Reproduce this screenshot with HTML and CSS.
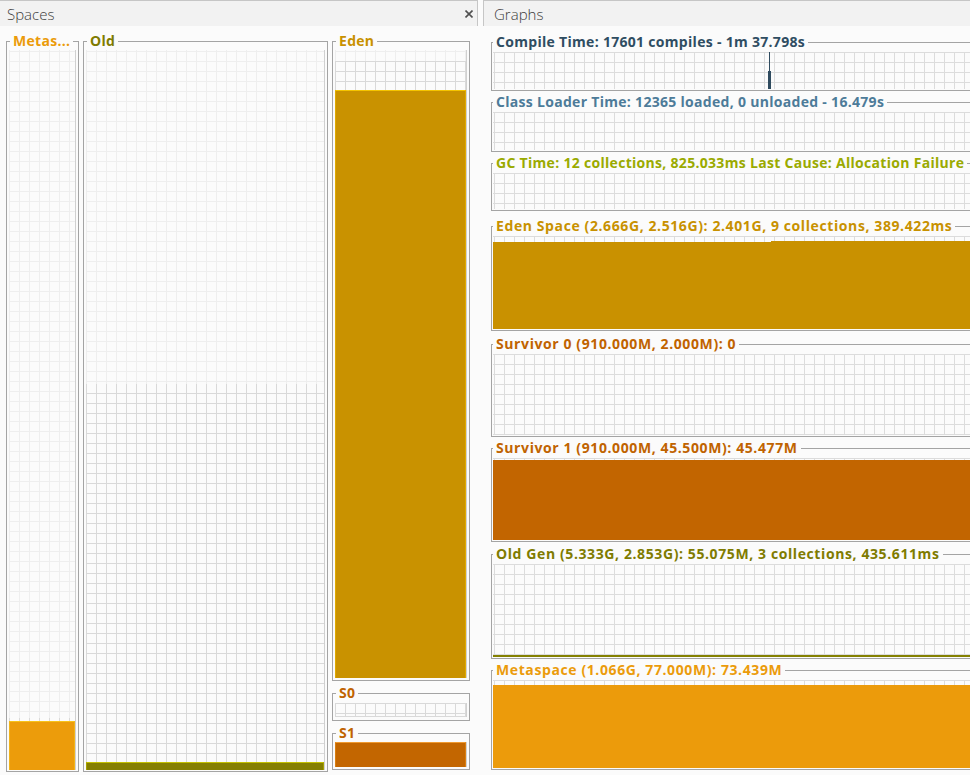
FILE: index.html
```html
<!DOCTYPE html>
<html>
<head>
<meta charset="utf-8">
<title>VisualGC</title>
<link rel="stylesheet" href="styles.css">
</head>
<body>
<div class="app">
  <section class="panel spaces">
    <header class="panel-head">
      <span class="panel-title">Spaces</span>
      <svg class="close" width="8" height="8" viewBox="0 0 8 8"><path d="M0.5 0.5L7.5 7.5M7.5 0.5L0.5 7.5"/></svg>
    </header>
    <div class="spaces-body">
      <fieldset class="box col-meta">
        <legend class="c-meta">Metas...</legend>
        <div class="chart">
          <div class="reserved"></div>
          <div class="committed" style="height:52px;--off:4px"><div class="sfill f-meta" style="height:49px"></div></div>
        </div>
      </fieldset>
      <fieldset class="box col-old">
        <legend class="c-old">Old</legend>
        <div class="chart">
          <div class="reserved"></div>
          <div class="committed" style="height:386px;--off:9px"><div class="sfill f-old" style="height:8px"></div></div>
        </div>
      </fieldset>
      <div class="col-right">
        <fieldset class="box box-eden">
          <legend class="c-eden">Eden</legend>
          <div class="chart chart-eden">
            <div class="reserved"></div>
            <div class="committed" style="height:617px;--off:0px"><div class="sfill f-eden" style="height:588px"></div></div>
          </div>
        </fieldset>
        <fieldset class="box box-s0">
          <legend class="c-surv">S0</legend>
          <div class="chart chart-s0">
            <div class="committed full" style="--off:0px"></div>
          </div>
        </fieldset>
        <fieldset class="box box-s1">
          <legend class="c-surv">S1</legend>
          <div class="chart chart-s1">
            <div class="committed full" style="--off:0px"><div class="sfill f-surv" style="height:25px"></div></div>
          </div>
        </fieldset>
      </div>
    </div>
  </section>
  <div class="splitter"></div>
  <section class="panel graphs">
    <header class="panel-head">
      <span class="panel-title">Graphs</span>
    </header>
    <div class="graphs-body">
      <fieldset class="gbox">
        <legend class="c-compile">Compile Time: 17601 compiles - 1m 37.798s</legend>
        <div class="gchart" style="height:37px">
          <div class="spike-gap"></div>
          <div class="spike"><div class="spike-line"></div><div class="spike-bar"></div></div>
        </div>
      </fieldset>
      <fieldset class="gbox m3">
        <legend class="c-class">Class Loader Time: 12365 loaded, 0 unloaded - 16.479s</legend>
        <div class="gchart" style="height:38px"></div>
      </fieldset>
      <fieldset class="gbox m3">
        <legend class="c-gc">GC Time: 12 collections, 825.033ms Last Cause: Allocation Failure</legend>
        <div class="gchart" style="height:36px"></div>
      </fieldset>
      <fieldset class="gbox m7">
        <legend class="c-eden wide">Eden Space (2.666G, 2.516G): 2.401G, 9 collections, 389.422ms</legend>
        <div class="gchart" style="height:93px">
          <div class="gfill g-eden eden-left" style="height:87px"></div>
          <div class="gfill g-eden" style="height:88px"></div>
        </div>
      </fieldset>
      <fieldset class="gbox m5">
        <legend class="c-surv wide">Survivor 0 (910.000M, 2.000M): 0</legend>
        <div class="gchart" style="height:81px"></div>
      </fieldset>
      <fieldset class="gbox m3">
        <legend class="c-surv wide">Survivor 1 (910.000M, 45.500M): 45.477M</legend>
        <div class="gchart" style="height:82px">
          <div class="gfill g-surv" style="height:80px"></div>
        </div>
      </fieldset>
      <fieldset class="gbox m4">
        <legend class="c-old wide">Old Gen (5.333G, 2.853G): 55.075M, 3 collections, 435.611ms</legend>
        <div class="gchart" style="height:93px">
          <div class="gfill g-old" style="height:2px"></div>
        </div>
      </fieldset>
      <fieldset class="gbox m3">
        <legend class="c-meta wide">Metaspace (1.066G, 77.000M): 73.439M</legend>
        <div class="gchart" style="height:88px">
          <div class="gfill g-meta" style="height:83px"></div>
        </div>
      </fieldset>
    </div>
  </section>
</div>
</body>
</html>
```

FILE: styles.css
```css
* { box-sizing: border-box; }
html, body { margin: 0; padding: 0; }
body {
  background: #fbfbfb;
  font-family: "Open Sans", "DejaVu Sans", sans-serif;
  overflow: hidden;
  width: 970px;
  height: 775px;
}
.app { display: flex; height: 775px; }
.panel { display: flex; flex-direction: column; min-width: 0; }
.spaces { width: 478px; flex: none; }
.splitter { width: 5px; flex: none; }
.graphs { flex: 1; overflow: hidden; }

.panel-head {
  height: 26px;
  flex: none;
  background: #f2f2f2;
  border-top: 1px solid #c6c6c6;
  display: flex;
  align-items: center;
  justify-content: space-between;
  padding: 0 4px 0 7px;
}
.spaces .panel-head { border-right: 1px solid #c6c6c6; }
.graphs .panel-head { border-left: 1px solid #c6c6c6; padding-left: 10px; }
.panel-title { font-size: 15px; font-weight: 300; color: #3c3c3c; line-height: 20px; }
.close { stroke: #505050; stroke-width: 1.6; fill: none; }

/* shared fieldset titles */
legend {
  padding: 0 3px;
  font-weight: 700;
  font-size: 14px;
  letter-spacing: 0.3px;
  line-height: 16px;
  white-space: nowrap;
}
legend.wide { letter-spacing: 0.6px; }
.c-meta { color: #eb9b0b; }
.c-old { color: #7f7b00; }
.c-eden { color: #c89100; }
.c-surv { color: #c06300; }
.c-compile { color: #2f4d62; }
.c-class { color: #4d7b99; }
.c-gc { color: #9aaa00; }

/* ---------- Spaces ---------- */
.spaces-body {
  flex: 1;
  min-height: 0;
  display: flex;
  gap: 4px;
  padding: 7px 0 3px 6px;
}
.box {
  margin: 0;
  min-width: 0;
  border: 1px solid #a4a4a4;
  padding: 1px 2px 1px 2px;
  display: flex;
  flex-direction: column;
}
.box legend { margin-left: 1px; }
.col-meta { width: 73px; flex: none; }
.col-old { width: 245px; flex: none; }
.col-right { width: 138px; flex: none; display: flex; flex-direction: column; gap: 4px; align-items: stretch; }
.box-eden { height: 648px; flex: none; padding-bottom: 2px; }
.box-s0 { height: 36px; flex: none; padding-top: 2px; }
.box-s1 { height: 45px; flex: none; }

.chart {
  flex: 1;
  display: flex;
  flex-direction: column;
  border-right: 1px solid #d0d0d0;
}
.chart-eden { flex: none; height: 628px; }
.chart-s0 { flex: none; height: 14px; }
.chart-s1 { flex: none; height: 25px; }
.reserved {
  flex: 1;
  background-color: #fbfbfb;
  background-image:
    linear-gradient(to right, #eeeeee 1px, transparent 1px),
    linear-gradient(to bottom, #eeeeee 1px, transparent 1px);
  background-size: 10px 10px;
  background-position: 0 1px;
}
.committed {
  flex: none;
  display: flex;
  flex-direction: column;
  justify-content: flex-end;
  background-color: #fbfbfb;
  background-image:
    linear-gradient(to right, #d9d9d9 1px, transparent 1px),
    linear-gradient(to bottom, #d9d9d9 1px, transparent 1px);
  background-size: 10px 10px;
  background-position: 0 var(--off);
}
.committed.full { flex: 1; }
.chart-s0 .committed { border-bottom: 1px solid #d9d9d9; }
.sfill { flex: none; border-top: 1px solid; border-left: 1px solid; border-right: 1px solid; }
.f-meta { background: #ec9c0b; border-color: #f7c21a #f2b41a #9c6a05 #f2b41a; }
.f-old { background: #857f00; border-color: #c4c000 #a6a000 #5a5600 #a6a000; }
.f-eden { background: #c99200; border-color: #f4c400 #e0aa00 #7e5c00 #e0aa00; }
.f-surv { background: #c36600; border-color: #f09a30 #da7f10 #7c4200 #da7f10; }

/* ---------- Graphs ---------- */
.graphs-body {
  flex: 1;
  min-height: 0;
  padding: 8px 0 0 8px;
  display: flex;
  flex-direction: column;
}
.gbox {
  margin: 0;
  width: 520px;
  flex: none;
  border: 1px solid #a4a4a4;
  padding: 2px 1px 1px 1px;
}
.m3 { margin-top: 3px; }
.m4 { margin-top: 4px; }
.m5 { margin-top: 5px; }
.m7 { margin-top: 7px; }
.gchart {
  display: flex;
  align-items: flex-end;
  background-color: #fbfbfb;
  background-image:
    linear-gradient(to right, #dcdcdc 1px, transparent 1px),
    linear-gradient(to bottom, #dcdcdc 1px, transparent 1px);
  background-size: 10px 10px;
  background-position: 1px 0;
}
.gfill { flex: 1; }
.eden-left { flex: none; width: 278px; }
.g-eden { background: #c99100; }
.g-surv { background: #c26500; }
.g-old { background: #848000; }
.g-meta { background: #ec9b0b; }

.spike-gap { width: 275px; flex: none; }
.spike { width: 3px; height: 100%; display: flex; flex-direction: column; align-items: center; }
.spike-line { flex: 1; width: 1px; background: #2f4b5f; }
.spike-bar { height: 18px; width: 3px; background: #2f4b5f; }
```
